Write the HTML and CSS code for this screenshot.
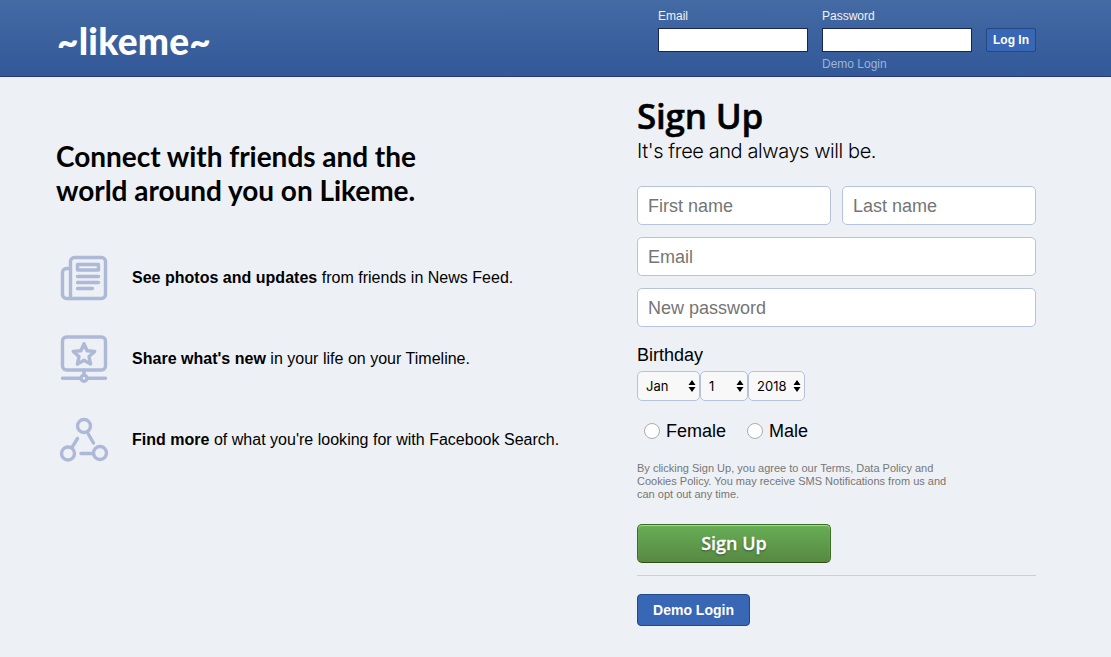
FILE: index.html
```html
<!DOCTYPE html>
<html lang="en">
<head>
<meta charset="utf-8">
<title>Likeme</title>
<link rel="stylesheet" href="styles.css">
</head>
<body>
<header class="header">
  <h1 class="logo">~likeme~</h1>
  <form class="login">
    <label class="login-field"><span>Email</span><input type="text"></label>
    <div class="login-field"><label for="pw">Password</label><input id="pw" type="password"><a class="demo-link">Demo Login</a></div>
    <button class="login-button" type="button">Log In</button>
  </form>
</header>
<main class="main">
  <section class="intro">
    <h2 class="intro-title">Connect with friends and the<br>world around you on Likeme.</h2>
    <ul class="features">
      <li class="feature">
        <svg class="icon" viewBox="0 0 56 56" width="56" height="56"><path d="M14.500 48.500V11.500a4 4 0 0 1 4-4h27a4 4 0 0 1 4 4v33a4 4 0 0 1-4 4H10.500a4 4 0 0 1-4-4v-22a4 4 0 0 1 4-4h4M21.500 14.500h21v5.500h-21zM21.500 26.500h21M21.500 32.500h21M21.500 38.500h15"/></svg>
        <p><b>See photos and updates</b> from friends in News Feed.</p>
      </li>
      <li class="feature">
        <svg class="icon" viewBox="0 0 56 56" width="56" height="56"><rect x="6.500" y="6" width="43" height="33" rx="4"/><path d="M28 12.700l3.100 7 7.600.8-5.700 5.100 1.600 7.500-6.600-3.900-6.600 3.900 1.600-7.500-5.700-5.100 7.600-.8zM28 39v4.500M6.500 47.300H24M32 47.300h17.500"/><circle cx="28" cy="47.300" r="3"/></svg>
        <p><b>Share what's new</b> in your life on your Timeline.</p>
      </li>
      <li class="feature">
        <svg class="icon" viewBox="0 0 56 56" width="56" height="56"><circle cx="28" cy="14" r="6.500"/><circle cx="12" cy="41.500" r="6.500"/><circle cx="44" cy="41" r="6.500"/><path d="M32 21.500l5.500 9.500M21.500 26.500l-5.500 9M25 41.500h12"/></svg>
        <p><b>Find more</b> of what you're looking for with Facebook Search.</p>
      </li>
    </ul>
  </section>
  <form class="signup">
    <h2 class="signup-title">Sign Up</h2>
    <p class="tagline">It's free and always will be.</p>
    <div class="fields">
      <input type="text" placeholder="First name">
      <input type="text" placeholder="Last name">
      <input class="wide" type="text" placeholder="Email">
      <input class="wide" type="password" placeholder="New password">
    </div>
    <p class="birthday">Birthday</p>
    <div class="selects">
      <div class="select month"><select><option>Jan</option></select><svg class="arrows" width="8" height="12" viewBox="0 0 8 12"><path d="M4 0l3.500 5h-7zM4 12L.5 7h7z"/></svg></div>
      <div class="select day"><select><option>1</option></select><svg class="arrows" width="8" height="12" viewBox="0 0 8 12"><path d="M4 0l3.500 5h-7zM4 12L.5 7h7z"/></svg></div>
      <div class="select year"><select><option>2018</option></select><svg class="arrows" width="8" height="12" viewBox="0 0 8 12"><path d="M4 0l3.500 5h-7zM4 12L.5 7h7z"/></svg></div>
    </div>
    <div class="genders">
      <label><input type="radio" name="gender">Female</label>
      <label><input type="radio" name="gender">Male</label>
    </div>
    <p class="terms">By clicking Sign Up, you agree to our Terms, Data Policy and<br>Cookies Policy. You may receive SMS Notifications from us and<br>can opt out any time.</p>
    <button class="signup-button" type="button">Sign Up</button>
    <div class="demo"><button class="demo-button" type="button">Demo Login</button></div>
  </form>
</main>
</body>
</html>
```
FILE: styles.css
```css
* { box-sizing: border-box; margin: 0; padding: 0; }
body { height: 657px; overflow: hidden; background: #edf0f5; color: #000; font-family: "Liberation Sans", Arial, sans-serif; }
button, input, select { font-family: inherit; }
.header { display: flex; justify-content: space-between; height: 77px; padding: 0 75px 0 57px; background: linear-gradient(#446ba4, #325898); border-bottom: 1px solid #29367f; }
.logo { padding-top: 18px; color: #fff; font: 900 37px/46px Lato, sans-serif; letter-spacing: .25px; }
.login { display: flex; align-items: flex-start; gap: 14px; padding-top: 9px; color: #f0f3f8; font-size: 12px; line-height: 14px; }
.login-field { display: flex; flex-direction: column; width: 150px; }
.login-field input { width: 150px; height: 24px; margin-top: 5px; border: 1px solid #1b2459; background: #fff; }
.demo-link { margin-top: 5px; color: #9cb4d8; }
.login-button { width: 50px; height: 24px; margin-top: 19px; border: 1px solid #234883; border-radius: 2px; background: #3867b5; color: #fff; font-size: 12px; font-weight: 700; }
.main { display: flex; justify-content: space-between; padding: 0 75px 0 56px; }
.intro { width: 540px; padding-top: 62px; }
.intro-title { font: 700 28px/34px Lato, sans-serif; letter-spacing: -.03px; }
.features { display: flex; flex-direction: column; gap: 25px; margin-top: 43px; list-style: none; }
.feature { display: flex; align-items: center; gap: 20px; height: 56px; font-size: 16px; line-height: 20px; letter-spacing: .015px; white-space: nowrap; }
.icon { flex: none; fill: none; stroke: #adb9d7; stroke-width: 3.4; stroke-linecap: round; stroke-linejoin: round; }
.signup { width: 399px; padding-top: 15px; }
.signup-title { height: 48px; font: 600 35px/48px "Open Sans", sans-serif; letter-spacing: -.2px; -webkit-text-stroke: .5px #000; white-space: nowrap; }
.tagline { height: 22px; font: 300 20px/22px Inter, sans-serif; letter-spacing: -.42px; white-space: nowrap; }
.fields { display: grid; grid-template-columns: 194px 194px; gap: 12px 11px; margin-top: 24px; }
.fields input { width: 100%; height: 39px; padding: 2px 10px 0; border: 1px solid #b6c3de; border-radius: 5px; background: #fff; font-size: 18px; }
.fields input::placeholder { color: #757575; }
.fields .wide { grid-column: 1 / 3; }
.birthday { margin-top: 18px; font-size: 18px; line-height: 20px; }
.selects { display: flex; margin-top: 6px; }
.select { position: relative; height: 30px; }
.select select { width: 100%; height: 30px; padding-left: 8px; border: 1px solid #b6c3de; border-radius: 5px; background: #f8f8f8; color: #000; font: 13px Inter, sans-serif; appearance: none; }
.month { width: 63px; }
.day { width: 48px; }
.year { width: 57px; }
.arrows { position: absolute; top: 9px; right: 4px; fill: #000; }
.genders { display: flex; gap: 21px; margin: 20px 0 0 7px; font-size: 18px; line-height: 20px; }
.genders label { display: flex; align-items: center; gap: 6px; }
.genders input { width: 16px; height: 16px; border: 1px solid #adadad; border-radius: 50%; background: #fff; appearance: none; }
.terms { margin-top: 21px; color: #777; font-size: 11px; line-height: 13px; white-space: nowrap; }
.signup-button { display: block; width: 194px; height: 39px; margin-top: 23px; padding-bottom: 2px; border: 1px solid #3b6e22; border-bottom-color: #2c5115; border-radius: 5px; background: linear-gradient(#67ae55, #578843); box-shadow: inset 0 1px 1px #a4e388; color: #fff; font: 600 18px/36px "Open Sans", sans-serif; -webkit-text-stroke: .3px #fff; text-shadow: 0 1px 2px rgba(0,0,0,.5); }
.demo { margin-top: 12px; padding-top: 18px; border-top: 1px solid #cccfd6; }
.demo-button { display: block; width: 113px; height: 32px; border: 1px solid #234883; border-radius: 4px; background: #3867b5; color: #fff; font-size: 14px; font-weight: 700; }
```
